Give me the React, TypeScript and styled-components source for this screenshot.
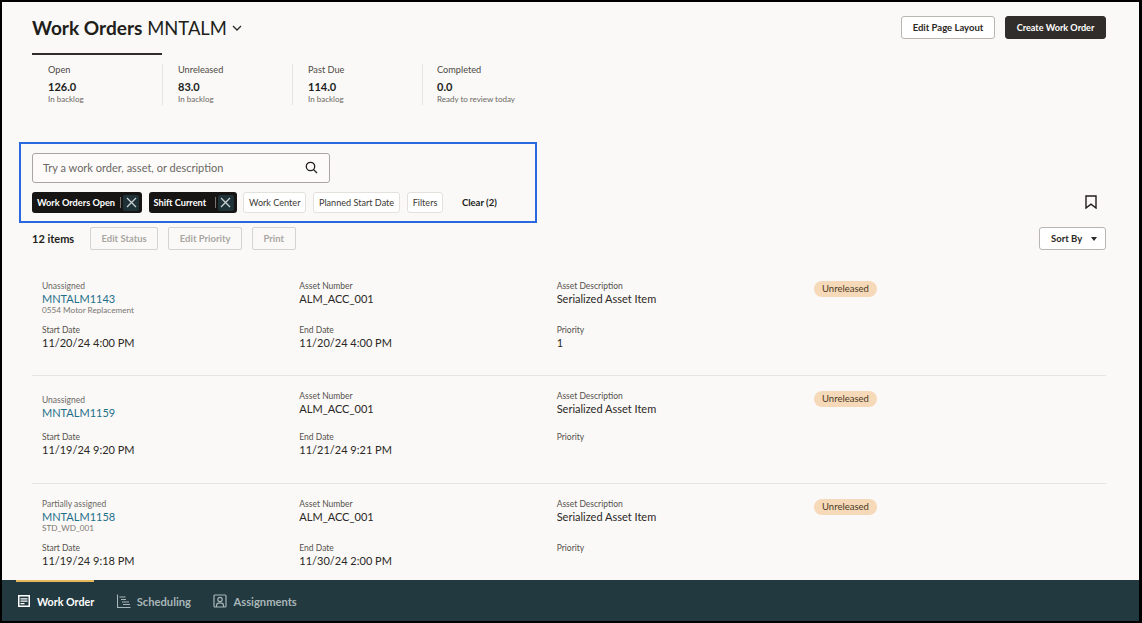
import React from "react";
import styled, { createGlobalStyle } from "styled-components";

const GlobalStyle = createGlobalStyle`
  html, body { margin: 0; padding: 0; background: #000; }
  body { font-family: Lato, "Noto Sans", "Liberation Sans", sans-serif; color: #201d1a; }
  * { box-sizing: border-box; }
`;

const Frame = styled.div`
  width: 1142px;
  height: 623px;
  display: flex;
  flex-direction: column;
  background: #faf9f7;
  border-style: solid;
  border-color: #000;
  border-width: 2px 3px 2px 2px;
  overflow: hidden;
`;

const Main = styled.main`
  flex: 1;
  min-height: 0;
  overflow: hidden;
  padding: 14px 33px 0 30px;
`;

const Header = styled.div`
  display: flex;
  justify-content: space-between;
  align-items: flex-start;
  height: 37px;
`;

const Title = styled.h1`
  margin: 0;
  font-size: 18.4px;
  line-height: 24px;
  font-weight: 400;
  display: flex;
  align-items: center;
  gap: 5px;
  b { font-size: 19.1px; font-weight: 700; }
`;

const HeaderActions = styled.div`
  display: flex;
  gap: 10px;
`;

const Button = styled.button<{ $primary?: boolean }>`
  height: 23px;
  padding: 0;
  border-radius: 3px;
  white-space: nowrap;
  font: 700 ${p => (p.$primary ? "9.1px" : "9.5px")}/1 Lato, sans-serif;
  width: ${p => (p.$primary ? "101px" : "94px")};
  background: ${p => (p.$primary ? "#312d2a" : "#fff")};
  color: ${p => (p.$primary ? "#fff" : "#2b2825")};
  border: 1px solid ${p => (p.$primary ? "#312d2a" : "#b9b6b2")};
`;

const TabLine = styled.div`
  width: 130px;
  height: 2px;
  background: #312d2a;
`;

const Stats = styled.div`
  display: flex;
  margin-top: 9px;
`;

const Stat = styled.div`
  width: 130px;
  height: 41px;
  padding-left: 16px;
  & + & { border-left: 1px solid #e6e4e1; padding-left: 15px; }
  &:last-child { padding-left: 14px; }
`;

const StatLabel = styled.div`
  font-size: 9.2px;
  line-height: 12px;
  color: #4e4a46;
`;

const StatValue = styled.div`
  margin-top: 4px;
  font-size: 11px;
  line-height: 14px;
  font-weight: 700;
`;

const StatNote = styled.div`
  font-size: 8px;
  line-height: 10px;
  color: #6b6763;
`;

const FilterRow = styled.div`
  display: flex;
  justify-content: space-between;
  align-items: flex-end;
  margin-top: 37px;
`;

const FilterBox = styled.div`
  width: 518px;
  height: 81px;
  margin-left: -13px;
  padding: 9px 11px 0 11px;
  border: 2px solid #2a68e0;
`;

const SearchBox = styled.div`
  width: 298px;
  height: 30px;
  display: flex;
  align-items: center;
  justify-content: space-between;
  padding: 0 11px 1px 10px;
  background: #fcfbfa;
  border: 1px solid #a9a6a2;
  border-radius: 3px;
  font-size: 11px;
  color: #6b6763;
`;

const Chips = styled.div`
  display: flex;
  align-items: center;
  gap: 6.5px;
  margin-top: 9px;
`;

const ActiveChip = styled.div<{ $width: number }>`
  width: ${p => p.$width}px;
  height: 21px;
  display: flex;
  align-items: center;
  padding: 0 3px 0 5px;
  border-radius: 3px;
  background: #161513;
  color: #fff;
  font-size: 9.2px;
  font-weight: 700;
  white-space: nowrap;
`;

const ChipDivider = styled.span`
  width: 1px;
  height: 11px;
  margin: 0 2px 0 auto;
  background: #77736f;
`;

const ChipClose = styled.span`
  width: 16px;
  height: 16px;
  display: flex;
  align-items: center;
  justify-content: center;
  background: #1e3136;
  border-radius: 2px;
`;

const Chip = styled.div`
  height: 21px;
  display: flex;
  align-items: center;
  padding: 0 5px 1px;
  border: 1px solid #e4e1dd;
  border-radius: 3px;
  background: #fff;
  font-size: 9.1px;
  color: #3c3834;
`;

const ClearLabel = styled.span`
  margin-left: 12px;
  padding-bottom: 1px;
  font-size: 9.5px;
  font-weight: 700;
`;

const BookmarkIcon = styled.svg`
  margin: 0 9px 14px 0;
`;

const Toolbar = styled.div`
  display: flex;
  align-items: center;
  gap: 10px;
  margin-top: 4px;
  height: 23px;
`;

const ItemCount = styled.span`
  width: 48px;
  font-size: 11px;
  font-weight: 700;
`;

const DisabledButton = styled.button`
  height: 23px;
  padding: 0 10.5px;
  border: 1px solid #d5d3cf;
  border-radius: 2px;
  background: transparent;
  color: #a9a6a2;
  font: 700 9.5px/1 Lato, sans-serif;
`;

const SortButton = styled.button`
  margin-left: auto;
  width: 67px;
  height: 23px;
  display: flex;
  align-items: center;
  justify-content: space-between;
  padding: 0 8px 0 11px;
  border: 1px solid #b9b6b2;
  border-radius: 3px;
  background: #fff;
  color: #2b2825;
  font: 700 9.5px/1 Lato, sans-serif;
`;

const Caret = styled.span`
  width: 0;
  height: 0;
  border-left: 3.5px solid transparent;
  border-right: 3.5px solid transparent;
  border-top: 4px solid #2b2825;
`;

const Rows = styled.div`
  margin-top: 15.5px;
`;

const Row = styled.div`
  display: grid;
  grid-template-columns: repeat(4, 257.33px);
  grid-template-rows: minmax(32px, auto) auto;
  row-gap: 9px;
  padding: 15px 0 26.75px 10px;
  border-bottom: 1px solid #e6e4e1;
  &:last-child { border-bottom: 0; }
`;

const Field = styled.div<{ $center?: boolean }>`
  align-self: ${p => (p.$center ? "center" : "start")};
`;

const FieldLabel = styled.div<{ $muted?: boolean; $note?: boolean }>`
  font-size: ${p => (p.$note ? "8.2px" : "8.5px")};
  line-height: 11px;
  color: ${p => (p.$note ? "#7a7672" : p.$muted ? "#6b6763" : "#55514d")};
`;

const FieldValue = styled.div`
  font-size: 11px;
  line-height: 13px;
  color: #2b2825;
`;

const OrderLink = styled(FieldValue)`
  color: #1f6f8b;
`;

const Pill = styled.span`
  height: 16px;
  padding: 0 8px;
  border-radius: 8px;
  background: #f6d9b8;
  font-size: 9.5px;
  line-height: 16px;
  color: #4b3a26;
  justify-self: start;
`;

const Footer = styled.nav`
  flex: none;
  height: 41px;
  display: flex;
  gap: 21.5px;
  padding-left: 14px;
  background: #22393f;
`;

const FooterTab = styled.div<{ $active?: boolean }>`
  display: flex;
  align-items: center;
  gap: 6px;
  height: 41px;
  padding: 1px 0 0 1px;
  font-size: ${p => (p.$active ? "10.7px" : "11.2px")};
  font-weight: 700;
  color: ${p => (p.$active ? "#fff" : "#a9b6b8")};
  box-shadow: ${p => (p.$active ? "inset 0 2px 0 #e6b85c" : "none")};
`;

const CloseIcon = () => (
  <svg width="11" height="11" viewBox="0 0 11 11" fill="none" stroke="#c9d0d1" strokeWidth="1.3">
    <path d="M1 1l9 9M10 1l-9 9" />
  </svg>
);

const WorkOrderIcon = () => (
  <svg width="14" height="14" viewBox="0 0 14 14">
    <path fillRule="evenodd" fill="#fff" d="M1 1h12v12H1zM2.5 2.5v9h9v-9z" />
    <path stroke="#fff" strokeWidth="1.3" d="M3.5 4.8h7M3.5 7.2h7M3.5 9.6h4" />
  </svg>
);

const ScheduleIcon = () => (
  <svg width="14" height="14" viewBox="0 0 14 14" fill="none" stroke="#a9b6b8" strokeWidth="1.1">
    <path d="M0.5 0.5v13h13M2.5 3h6M4 5.5h5M5 8h7M6 10.5h7" />
  </svg>
);

const AssignIcon = () => (
  <svg width="14" height="14" viewBox="0 0 14 14" fill="none" stroke="#a9b6b8" strokeWidth="1.2">
    <rect x="1" y="1" width="12" height="12" rx="1" />
    <circle cx="7" cy="5.5" r="2.2" />
    <path d="M3.5 13v-1.5c0-1.6 1.2-2.6 3.5-2.6s3.5 1 3.5 2.6V13" />
  </svg>
);

type Order = {
  assignment: string;
  number: string;
  note?: string;
  start: string;
  end: string;
  priority?: string;
};

const orders: Order[] = [
  { assignment: "Unassigned", number: "MNTALM1143", note: "0554 Motor Replacement", start: "11/20/24 4:00 PM", end: "11/20/24 4:00 PM", priority: "1" },
  { assignment: "Unassigned", number: "MNTALM1159", start: "11/19/24 9:20 PM", end: "11/21/24 9:21 PM" },
  { assignment: "Partially assigned", number: "MNTALM1158", note: "STD_WD_001", start: "11/19/24 9:18 PM", end: "11/30/24 2:00 PM" },
];

const stats = [
  { label: "Open", value: "126.0", note: "In backlog" },
  { label: "Unreleased", value: "83.0", note: "In backlog" },
  { label: "Past Due", value: "114.0", note: "In backlog" },
  { label: "Completed", value: "0.0", note: "Ready to review today" },
];

export default function App() {
  return (
    <Frame>
      <GlobalStyle />
      <Main>
        <Header>
          <Title>
            <span>
              <b>Work Orders</b> MNTALM
            </span>
            <svg width="10" height="6" viewBox="0 0 10 6" fill="none" stroke="#2b2825" strokeWidth="1.3">
              <path d="M1 1l4 4 4-4" />
            </svg>
          </Title>
          <HeaderActions>
            <Button>Edit Page Layout</Button>
            <Button $primary>Create Work Order</Button>
          </HeaderActions>
        </Header>
        <TabLine />
        <Stats>
          {stats.map(s => (
            <Stat key={s.label}>
              <StatLabel>{s.label}</StatLabel>
              <StatValue>{s.value}</StatValue>
              <StatNote>{s.note}</StatNote>
            </Stat>
          ))}
        </Stats>
        <FilterRow>
          <FilterBox>
            <SearchBox>
              <span>Try a work order, asset, or description</span>
              <svg width="13" height="13" viewBox="0 0 13 13" fill="none" stroke="#201d1a" strokeWidth="1.3">
                <circle cx="5.5" cy="5.5" r="4.2" />
                <path d="M8.6 8.6l3.4 3.4" />
              </svg>
            </SearchBox>
            <Chips>
              <ActiveChip $width={110}>
                Work Orders Open
                <ChipDivider />
                <ChipClose>
                  <CloseIcon />
                </ChipClose>
              </ActiveChip>
              <ActiveChip $width={88}>
                Shift Current
                <ChipDivider />
                <ChipClose>
                  <CloseIcon />
                </ChipClose>
              </ActiveChip>
              <Chip>Work Center</Chip>
              <Chip>Planned Start Date</Chip>
              <Chip>Filters</Chip>
              <ClearLabel>Clear (2)</ClearLabel>
            </Chips>
          </FilterBox>
          <BookmarkIcon width="12" height="14" viewBox="0 0 12 14" fill="none" stroke="#201d1a" strokeWidth="1.4">
            <path d="M1 1h10v12L6 9.2 1 13z" />
          </BookmarkIcon>
        </FilterRow>
        <Toolbar>
          <ItemCount>12 items</ItemCount>
          <DisabledButton>Edit Status</DisabledButton>
          <DisabledButton>Edit Priority</DisabledButton>
          <DisabledButton>Print</DisabledButton>
          <SortButton>
            Sort By
            <Caret />
          </SortButton>
        </Toolbar>
        <Rows>
          {orders.map(o => (
            <Row key={o.number}>
              <Field $center>
                <FieldLabel $muted>{o.assignment}</FieldLabel>
                <OrderLink>{o.number}</OrderLink>
                {o.note && <FieldLabel $note>{o.note}</FieldLabel>}
              </Field>
              <Field>
                <FieldLabel>Asset Number</FieldLabel>
                <FieldValue>ALM_ACC_001</FieldValue>
              </Field>
              <Field>
                <FieldLabel>Asset Description</FieldLabel>
                <FieldValue>Serialized Asset Item</FieldValue>
              </Field>
              <Pill>Unreleased</Pill>
              <Field>
                <FieldLabel>Start Date</FieldLabel>
                <FieldValue>{o.start}</FieldValue>
              </Field>
              <Field>
                <FieldLabel>End Date</FieldLabel>
                <FieldValue>{o.end}</FieldValue>
              </Field>
              <Field>
                <FieldLabel>Priority</FieldLabel>
                <FieldValue>{o.priority}</FieldValue>
              </Field>
            </Row>
          ))}
        </Rows>
      </Main>
      <Footer>
        <FooterTab $active>
          <WorkOrderIcon />
          Work Order
        </FooterTab>
        <FooterTab>
          <ScheduleIcon />
          Scheduling
        </FooterTab>
        <FooterTab>
          <AssignIcon />
          Assignments
        </FooterTab>
      </Footer>
    </Frame>
  );
}
